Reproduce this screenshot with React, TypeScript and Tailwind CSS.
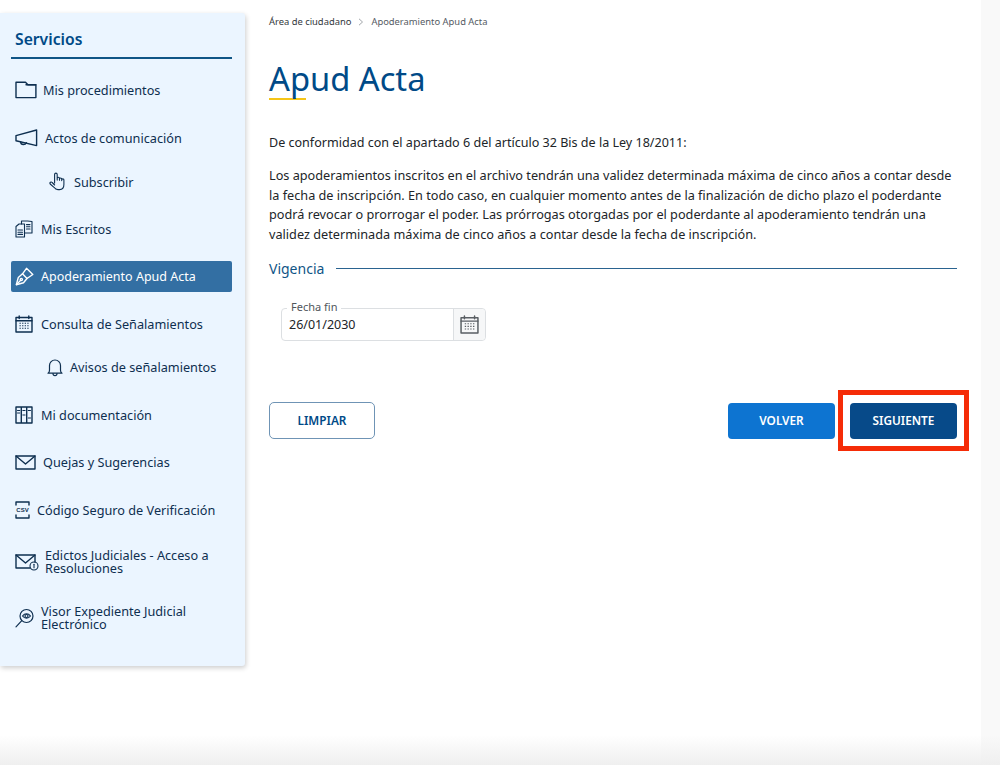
import React from "react";

const stroke = {
  fill: "none",
  stroke: "currentColor",
  strokeWidth: 1.4,
  strokeLinecap: "round" as const,
  strokeLinejoin: "round" as const,
};

const FolderIcon = () => (
  <svg width="22" height="18" viewBox="0 0 22 18" {...stroke}>
    <path d="M1 16.600V1.200h9.500l2.400 2.600h8v12.800z" />
    <path d="M11 3.800h9.800" />
  </svg>
);

const MegaphoneIcon = () => (
  <svg width="23" height="18" viewBox="0 0 23 18" {...stroke}>
    <path d="M1 6.600 21.600 1v15.600L1 11.800z" />
    <path d="M5.500 12.600c.2 2 1.200 2.900 2.900 2.900 1.500 0 2.500-.8 2.900-1.800" />
  </svg>
);

const HandIcon = () => (
  <svg width="17" height="20" viewBox="0 0 17 20" {...stroke} strokeWidth={1.1}>
    <path d="M5.600 11V2.500c0-1.900 2.600-1.900 2.600 0v5.600m0-1.700c0-1.500 2.300-1.500 2.300 0v1.900m0-1.300c0-1.400 2.200-1.400 2.200 0v1.600m0-.8c0-1.300 2.200-1.300 2.200 0v4.800c0 2.800-1.500 5-4.300 5H8.900c-1.800 0-2.900-.9-3.900-2.300L1.200 12c-.9-1.400.9-2.700 2-1.500l2.400 2.500" />
  </svg>
);

const DocsIcon = () => (
  <svg width="19" height="18" viewBox="0 0 19 18" {...stroke} strokeWidth={1.1}>
    <path d="M1 6.500 4 4h5.500v13H1z" />
    <path d="M6.500 4V1h6l4.500 .5V13h-7.500" />
    <path d="M3 10h4.500M3 12.200h4.500M3 14.400h4.500M11.500 4.600h3.500M11.500 6.800h3.500M11.500 9h3.500" />
  </svg>
);

const PenIcon = () => (
  <svg width="19" height="19" viewBox="0 0 19 19" {...stroke}>
    <path d="M11.500 1.300 17.800 7.500 12 11.500 7.500 6.800z" />
    <path d="M7.500 6.800 3.300 10.500 1.300 17.700l7.200-1.900L12 11.500" />
    <path d="m1.500 17.500 4-4" />
    <circle cx="6.300" cy="12.500" r="1.100" />
  </svg>
);

const CalendarIcon = ({ size = 18 }: { size?: number }) => (
  <svg width={size} height={size} viewBox="0 0 18 18" {...stroke}>
    <path d="M1 2.500h16V17H1z" />
    <path d="M1 5.800h16M4.200 1v2.500M13.800 1v2.500" />
    <path
      strokeWidth={1.1}
      strokeLinecap="butt"
      strokeDasharray="1.300 1.300"
      d="M4.500 8.300h9.500M4.500 10.800h9.500M4.500 13.300h9.500"
    />
  </svg>
);

const BellIcon = () => (
  <svg width="16" height="19" viewBox="0 0 16 19" {...stroke} strokeWidth={1.2}>
    <path d="M1 15.200c1.100-.6 1.500-1.500 1.500-3V7.500a5.500 5.500 0 0 1 11 0v4.700c0 1.500.4 2.400 1.500 3z" />
    <path d="M6 15.500c0 2.800 4 2.800 4 0" />
  </svg>
);

const BooksIcon = () => (
  <svg width="18" height="18" viewBox="0 0 18 18" {...stroke}>
    <path d="M1 1h5.300v16H1zM6.300 1h5.400v16H6.300zM11.700 1H17v16h-5.300z" />
    <path d="M2.500 4.500h2.300M2.500 7h2.300M7.800 4.500h2.300M7.800 9h2.300M13.200 4.500h2.300M13.200 12h2.300" strokeWidth={1} />
  </svg>
);

const MailIcon = () => (
  <svg width="21" height="15" viewBox="0 0 21 15" {...stroke}>
    <path d="M1 1h19v13H1z" />
    <path d="m1 1 9.500 8L20 1" />
  </svg>
);

const CsvIcon = () => (
  <svg width="15" height="18" viewBox="0 0 15 18" {...stroke}>
    <path d="M1 4V1h13v3M1 14v3h13v-3" />
    <text
      x="7.500"
      y="11.300"
      textAnchor="middle"
      fontSize="6"
      fontWeight="700"
      stroke="none"
      fill="currentColor"
      fontFamily="Liberation Sans, sans-serif"
    >
      CSV
    </text>
  </svg>
);

const MailInfoIcon = () => (
  <svg width="24" height="17" viewBox="0 0 24 17" {...stroke}>
    <path d="M15 14H1V1h19v7" />
    <path d="m1 1 9.500 8L20 1" />
    <circle cx="19" cy="12" r="4" strokeWidth={1.1} />
    <path d="M19 10.200v3.600" strokeWidth={1.1} />
  </svg>
);

const EyeSearchIcon = () => (
  <svg width="19" height="20" viewBox="0 0 19 20" {...stroke} strokeWidth={1.2}>
    <circle cx="11.500" cy="8" r="6.500" />
    <path d="M6.800 12.700 1 18.800" />
    <path d="M7.500 8c2.300-3 5.700-3 8 0-2.300 3-5.700 3-8 0z" />
    <circle cx="11.500" cy="8" r="1.500" />
  </svg>
);

const menu = [
  { label: "Mis procedimientos", icon: <FolderIcon />, cls: "h-[48px] pl-[15px] gap-[6px]" },
  { label: "Actos de comunicación", icon: <MegaphoneIcon />, cls: "h-[48px] pl-[15px] gap-[7px]" },
  { label: "Subscribir", icon: <HandIcon />, cls: "h-[40px] mb-[3px] pl-[49px] gap-[8px]" },
  { label: "Mis Escritos", icon: <DocsIcon />, cls: "h-[48px] pl-[15px] gap-[7px]" },
  { label: "Apoderamiento Apud Acta", icon: <PenIcon />, cls: "h-[31px] w-[221px] pl-[4px] gap-[7px] ml-[11px] my-[8px] bg-[#336fa3] rounded-[2px] text-white text-[12.500px]" },
  { label: "Consulta de Señalamientos", icon: <CalendarIcon />, cls: "h-[48px] pl-[15px] gap-[8px]" },
  { label: "Avisos de señalamientos", icon: <BellIcon />, cls: "h-[38px] mb-[5px] pl-[47px] gap-[7px]" },
  { label: "Mi documentación", icon: <BooksIcon />, cls: "h-[48px] pl-[15px] gap-[8px]" },
  { label: "Quejas y Sugerencias", icon: <MailIcon />, cls: "h-[47px] pl-[15px] gap-[7px]" },
  { label: "Código Seguro de Verificación", icon: <CsvIcon />, cls: "h-[48px] pl-[15px] gap-[7px]" },
  { label: "Edictos Judiciales - Acceso a Resoluciones", icon: <MailInfoIcon />, cls: "h-[56px] pl-[15px] gap-[6px]" },
  { label: "Visor Expediente Judicial Electrónico", icon: <EyeSearchIcon />, cls: "h-[56px] pl-[15px] gap-[7px]" },
];

export default function App() {
  return (
    <div className="relative flex h-[765px] w-full overflow-hidden bg-white font-['Noto_Sans',sans-serif]">
      {/* Sidebar */}
      <aside className="mt-[13px] h-[653px] w-[245px] shrink-0 rounded-r-[3px] bg-[#ebf5ff] pt-[14px] shadow-[1px_2px_5px_rgba(0,0,0,0.2)]">
        <div className="mr-[13px] ml-[11px] border-b-2 border-[#0f5586] pb-[6px] pl-[4px] text-[15.700px] leading-[24px] font-semibold text-[#004a87]">
          Servicios
        </div>
        <nav className="mt-[7px] flex flex-col text-[12.700px] leading-[13px] text-[#0e2f50]">
          {menu.map((item) => (
            <a key={item.label} className={`flex items-center ${item.cls}`}>
              <span className="flex shrink-0 items-center">{item.icon}</span>
              <span className="w-[184px]">{item.label}</span>
            </a>
          ))}
        </nav>
      </aside>

      {/* Main content */}
      <main className="w-[712px] shrink-0 pl-[24px]">
        <div className="flex h-[44px] items-center gap-[7px] text-[9.400px] text-[#555b63]">
          <span className="text-[#33383d]">Área de ciudadano</span>
          <svg width="6" height="8" viewBox="0 0 6 8" fill="none" stroke="#8a8f94" strokeWidth="0.8">
            <path d="m1 .8 3.500 3.200L1 7.200" />
          </svg>
          <span>Apoderamiento Apud Acta</span>
        </div>
        <h1 className="mt-[16px] text-[32.700px] leading-[38px] font-normal text-[#004a87]">
          Apud Acta
        </h1>
        <div className="h-[2px] w-[37px] bg-[#f5c518]" />
        <p className="mt-[33px] text-[12.550px] leading-[20px] text-[#212529]">
          De conformidad con el apartado 6 del artículo 32 Bis de la Ley 18/2011:
        </p>
        <p className="mt-[13px] h-[79px] w-[700px] text-[12.700px] leading-[19.700px] text-[#212529]">
          Los apoderamientos inscritos en el archivo tendrán una validez determinada máxima de cinco años a contar desde
          <br />
          la fecha de inscripción. En todo caso, en cualquier momento antes de la finalización de dicho plazo el poderdante
          <br />
          podrá revocar o prorrogar el poder. Las prórrogas otorgadas por el poderdante al apoderamiento tendrán una
          <br />
          validez determinada máxima de cinco años a contar desde la fecha de inscripción.
        </p>
        <div className="mt-[12px] flex h-[22px] w-[688px] items-center gap-[12px]">
          <span className="text-[14px] text-[#0f5586]">Vigencia</span>
          <span className="h-px flex-1 bg-[#2a6390]" />
        </div>

        {/* Date field */}
        <div className="relative mt-[29px] ml-[12px] flex h-[33px] w-[205px] rounded-[4px] border border-[#dcdfe2]">
          <span className="absolute -top-[9px] left-[5px] bg-white px-[4px] text-[11px] leading-[14px] text-[#50565c]">
            Fecha fin
          </span>
          <span className="flex flex-1 items-center pt-[1px] pl-[7px] text-[12.500px] text-[#212529]">
            26/01/2030
          </span>
          <span className="flex w-[32px] items-center justify-center rounded-r-[4px] border-l border-[#dcdfe2] bg-[#f6f7f8] text-[#5a5f64]">
            <CalendarIcon size={19} />
          </span>
        </div>

        {/* Actions */}
        <div className="mt-[61px] flex h-[37px] w-[688px] items-center justify-between">
          <button className="h-[37px] w-[106px] rounded-[5px] border border-[#6f94b5] bg-white text-[11.800px] font-semibold text-[#004a87]">
            LIMPIAR
          </button>
          <div className="flex gap-[15px]">
            <button className="h-[36px] w-[107px] rounded-[4px] bg-[#0d74d1] pt-[1px] text-[11.800px] font-semibold text-white">
              VOLVER
            </button>
            <button className="relative h-[36px] w-[107px] rounded-[4px] bg-[#074a89] pt-[1px] text-[11.800px] font-semibold text-white">
              SIGUIENTE
              <span className="absolute -top-[13px] -right-[12px] -bottom-[12px] -left-[12px] border-[5px] border-[#f52c07]" />
            </button>
          </div>
        </div>
      </main>

      {/* Scrollbar strip */}
      <div className="ml-auto w-[19px] shrink-0 bg-[#f9f9f9]" />

      {/* Bottom fade */}
      <div className="pointer-events-none absolute inset-x-0 bottom-0 h-[30px] bg-gradient-to-b from-transparent to-[#efefef]" />
    </div>
  );
}
